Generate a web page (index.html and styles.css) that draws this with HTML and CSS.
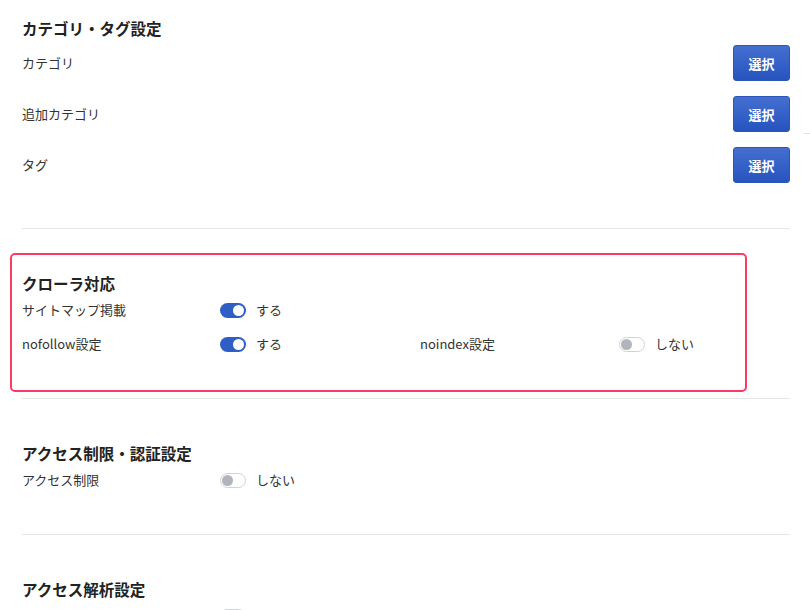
FILE: index.html
```html
<!DOCTYPE html>
<html lang="ja">
<head>
<meta charset="utf-8">
<title>設定</title>
<link rel="stylesheet" href="styles.css">
</head>
<body>
<main class="settings">
  <section class="section section-first">
    <h2 class="section-title">カテゴリ・タグ設定</h2>
    <div class="pick-list">
      <div class="pick-row">
        <span class="label">カテゴリ</span>
        <button class="btn-select" type="button">選択</button>
      </div>
      <div class="pick-row">
        <span class="label">追加カテゴリ</span>
        <button class="btn-select" type="button">選択</button>
      </div>
      <div class="pick-row">
        <span class="label">タグ</span>
        <button class="btn-select" type="button">選択</button>
      </div>
    </div>
  </section>

  <section class="section section-highlight">
    <h2 class="section-title">クローラ対応</h2>
    <div class="field-grid">
      <span class="label">サイトマップ掲載</span>
      <span class="switch-field"><span class="switch on"></span><span class="switch-text">する</span></span>
    </div>
    <div class="field-grid">
      <span class="label">nofollow設定</span>
      <span class="switch-field"><span class="switch on"></span><span class="switch-text">する</span></span>
      <span class="label">noindex設定</span>
      <span class="switch-field"><span class="switch off"></span><span class="switch-text">しない</span></span>
    </div>
  </section>

  <section class="section">
    <h2 class="section-title">アクセス制限・認証設定</h2>
    <div class="field-grid">
      <span class="label">アクセス制限</span>
      <span class="switch-field"><span class="switch off"></span><span class="switch-text">しない</span></span>
    </div>
  </section>

  <section class="section">
    <h2 class="section-title">アクセス解析設定</h2>
    <div class="field-grid">
      <span class="label"></span>
      <span class="switch-field"><span class="switch off" aria-label="アクセス解析"></span></span>
    </div>
  </section>
</main>
<span class="edge-mark"></span>
</body>
</html>
```

FILE: styles.css
```css
html, body {
  margin: 0;
  padding: 0;
  background: #ffffff;
  overflow: hidden;
}

body {
  font-family: "Noto Sans CJK JP", "Noto Sans", sans-serif;
  color: #333333;
  position: relative;
  width: 810px;
  height: 610px;
}

.settings {
  margin-left: 22px;
  width: 768px;
  display: flex;
  flex-direction: column;
}

.section {
  position: relative;
  padding: 44px 0 42px;
  border-bottom: 1px solid #e6e6e6;
  display: flex;
  flex-direction: column;
  gap: 10px;
}

.section-first {
  padding: 18px 0 45px;
  gap: 0;
}

.section-highlight::before {
  content: "";
  position: absolute;
  left: -12px;
  top: 24px;
  width: 733px;
  bottom: 6px;
  border: 2px solid #fb3a66;
  border-radius: 5px;
  pointer-events: none;
}

.section-title {
  margin: 0 0 -5px;
  font-size: 15.5px;
  line-height: 20px;
  font-weight: 700;
  color: #222222;
}

.section-first .section-title {
  margin-bottom: 0;
}

.label {
  font-size: 13px;
  line-height: 24px;
  color: #333333;
}

.pick-list {
  margin-top: 7px;
  display: flex;
  flex-direction: column;
  gap: 15px;
}

.pick-row {
  display: flex;
  align-items: center;
  justify-content: space-between;
  height: 36px;
}

.btn-select {
  width: 57px;
  height: 36px;
  border: 1px solid #2b55b8;
  border-radius: 3px;
  background: linear-gradient(#446fd0, #2753bf);
  color: #ffffff;
  font-family: inherit;
  font-size: 13px;
  font-weight: 700;
  padding: 0;
  cursor: pointer;
}

.field-grid {
  display: grid;
  grid-template-columns: 198px 200px 199px 1fr;
  align-items: center;
  height: 24px;
}

.switch-field {
  display: flex;
  align-items: center;
  gap: 10px;
}

.switch {
  position: relative;
  width: 26px;
  height: 15px;
  border-radius: 8px;
  box-sizing: border-box;
}

.switch::after {
  content: "";
  position: absolute;
  top: 2px;
  width: 11px;
  height: 11px;
  border-radius: 50%;
}

.switch.on {
  background: #2f5ec6;
}

.switch.on::after {
  right: 2px;
  background: #ffffff;
}

.switch.off {
  background: #ffffff;
  border: 1px solid #cfd3d8;
}

.switch.off::after {
  top: 1px;
  left: 1px;
  background: #b1b5bb;
}

.switch-text {
  font-size: 13px;
  line-height: 24px;
  color: #333333;
}

.edge-mark {
  position: absolute;
  left: 804px;
  top: 133px;
  width: 6px;
  height: 1px;
  background: #e3e3e3;
}
```
